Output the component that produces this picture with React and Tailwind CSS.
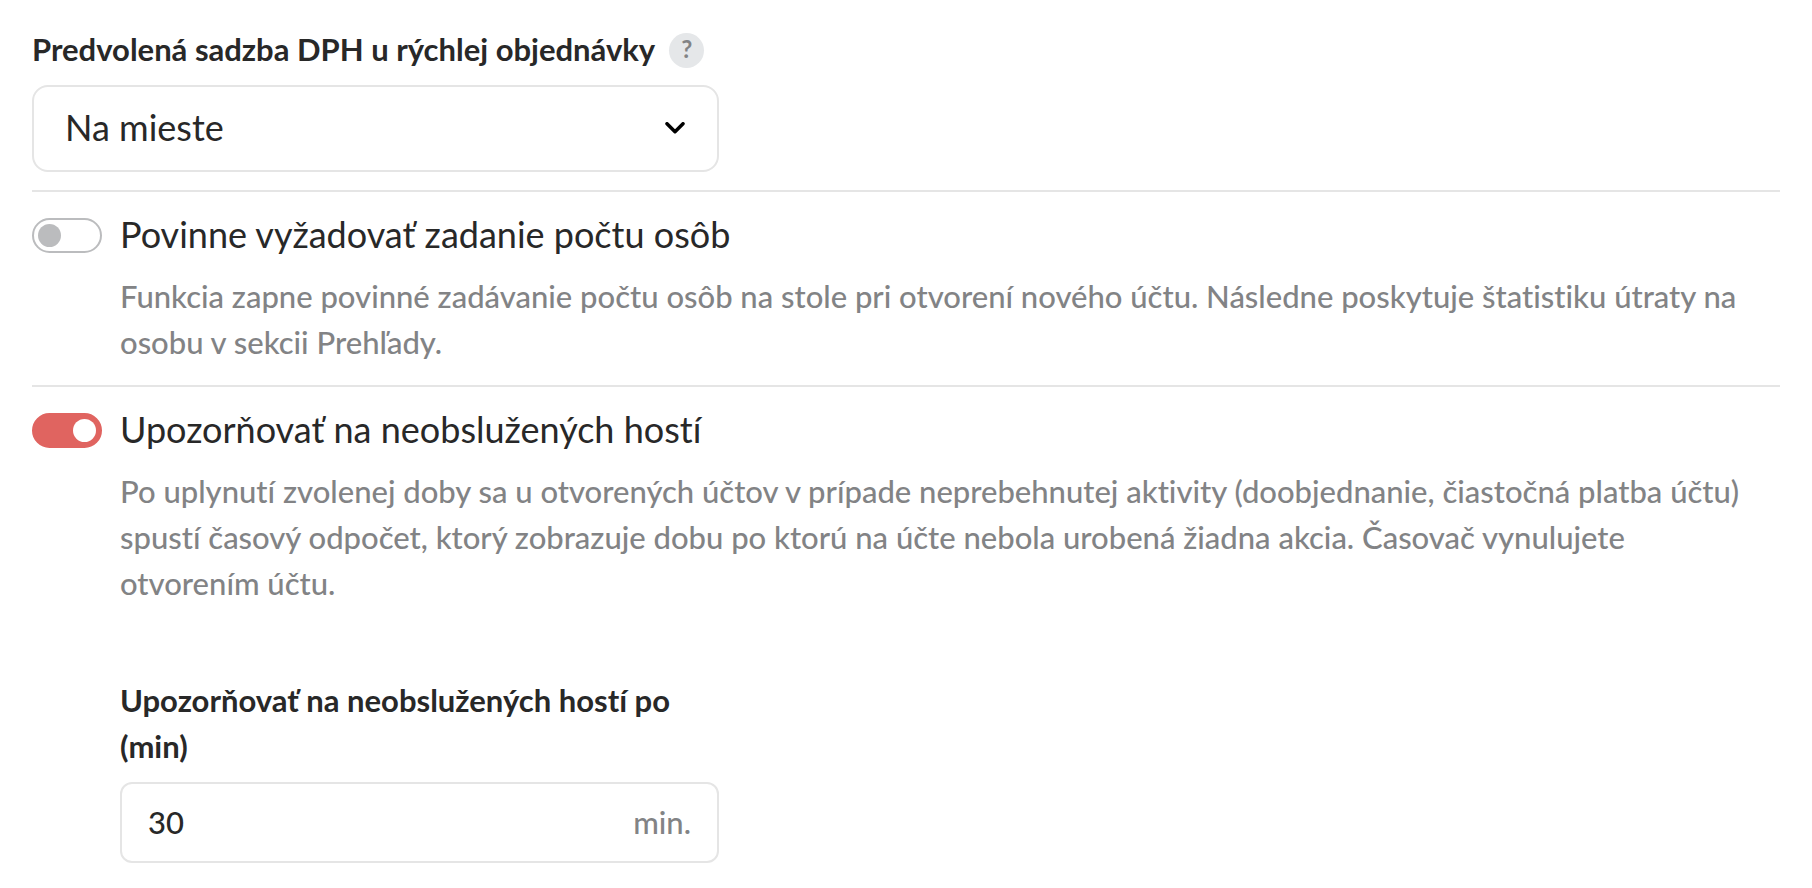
import { useState } from 'react';

function Toggle({ id, checked, onChange }) {
  return (
    <input
      id={id}
      type="checkbox"
      role="switch"
      checked={checked}
      onChange={(e) => onChange(e.target.checked)}
      className="mt-2 flex h-[35px] w-[70px] shrink-0 cursor-pointer appearance-none items-center rounded-full border-2 border-[#bbbcbe] bg-white px-1 before:size-[23px] before:rounded-full before:bg-[#bbbcbe] checked:justify-end checked:border-[#e06460] checked:bg-[#e06460] checked:before:bg-white"
    />
  );
}

function SettingRow({ id, title, description, checked, onChange, children }) {
  return (
    <section className="flex gap-[18px] border-t-2 border-[#e5e5e5] pt-[18px] pb-5">
      <Toggle id={id} checked={checked} onChange={onChange} />
      <div className="min-w-0 flex-1">
        <label htmlFor={id} className="block text-[36px] leading-[48px]">{title}</label>
        <p className="mt-[15px] pr-4 text-[31px] leading-[46px] font-medium text-[#828385]">{description}</p>
        {children}
      </div>
    </section>
  );
}

export default function App() {
  const [vat, setVat] = useState('onsite');
  const [requireGuests, setRequireGuests] = useState(false);
  const [notifyUnserved, setNotifyUnserved] = useState(true);
  const [minutes, setMinutes] = useState('30');

  return (
    <main className="bg-white px-8 pt-[26px] font-['Lato',sans-serif] text-[#282828] [font-variant-ligatures:none]">
      <div className="pb-[18px]">
        <div className="flex items-center gap-[14px]">
          <label htmlFor="vat" className="text-[31px] leading-[46px] font-bold">
            Predvolená sadzba DPH u rýchlej objednávky
          </label>
          <button type="button" className="mt-[3px] size-[35px] rounded-full bg-[#e5e7e9] pb-1 text-[24px] leading-none font-bold text-[#828385]">
            ?
          </button>
        </div>
        <div className="relative mt-[13px] max-w-[687px]">
          <select
            id="vat"
            value={vat}
            onChange={(e) => setVat(e.target.value)}
            className="h-[87px] w-full appearance-none rounded-2xl border-2 border-[#e5e5e5] bg-white px-[31px] pb-1 text-[36px]"
          >
            <option value="onsite">Na mieste</option>
            <option value="takeaway">So sebou</option>
          </select>
          <svg
            viewBox="0 0 20 12"
            className="pointer-events-none absolute top-0 right-[34px] bottom-0.5 my-auto h-3 w-5 fill-none stroke-black stroke-[3.5]"
            strokeLinecap="round"
            strokeLinejoin="round"
          >
            <path d="M2 1.75l8 8 8-8" />
          </svg>
        </div>
      </div>

      <SettingRow
        id="require-guests"
        title="Povinne vyžadovať zadanie počtu osôb"
        description="Funkcia zapne povinné zadávanie počtu osôb na stole pri otvorení nového účtu. Následne poskytuje štatistiku útraty na osobu v sekcii Prehľady."
        checked={requireGuests}
        onChange={setRequireGuests}
      />

      <SettingRow
        id="notify-unserved"
        title="Upozorňovať na neobslužených hostí"
        description="Po uplynutí zvolenej doby sa u otvorených účtov v prípade neprebehnutej aktivity (doobjednanie, čiastočná platba účtu) spustí časový odpočet, ktorý zobrazuje dobu po ktorú na účte nebola urobená žiadna akcia. Časovač vynulujete otvorením účtu."
        checked={notifyUnserved}
        onChange={setNotifyUnserved}
      >
        <div className="mt-[71px] max-w-[599px]">
          <label htmlFor="minutes" className="block text-[31px] leading-[46px] font-bold">
            Upozorňovať na neobslužených hostí po (min)
          </label>
          <div className="mt-[13px] flex h-[81px] items-center rounded-xl border-2 border-[#e5e5e5] px-[26px] text-[31px] font-medium">
            <input
              id="minutes"
              type="text"
              inputMode="numeric"
              value={minutes}
              onChange={(e) => setMinutes(e.target.value)}
              className="min-w-0 flex-1 outline-none"
            />
            <span className="text-[#828385]">min.</span>
          </div>
        </div>
      </SettingRow>
    </main>
  );
}
